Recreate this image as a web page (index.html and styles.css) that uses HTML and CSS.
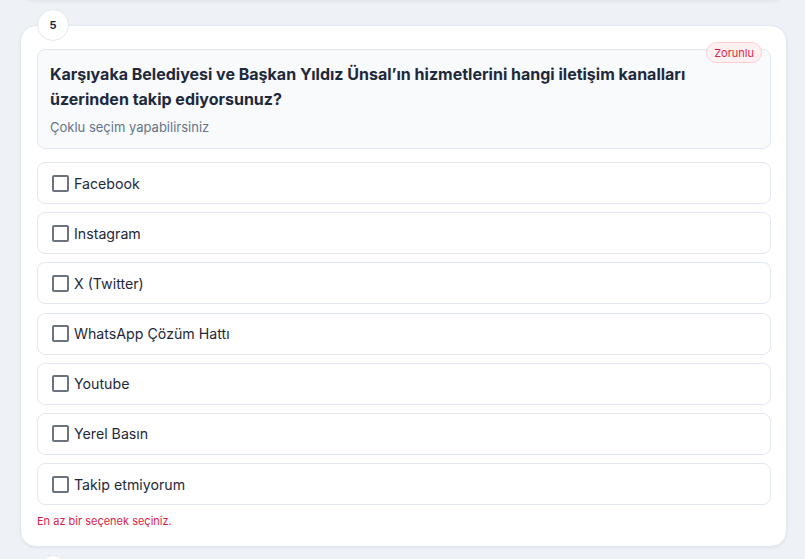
FILE: index.html
```html
<!DOCTYPE html>
<html lang="tr">
<head>
<meta charset="utf-8">
<link rel="stylesheet" href="styles.css">
</head>
<body>
<div class="list">
  <div class="card card-prev"></div>
  <section class="card">
    <div class="num">5</div>
    <div class="question">
      <span class="required">Zorunlu</span>
      <h2 class="q-title">Karşıyaka Belediyesi ve Başkan Yıldız Ünsal’ın hizmetlerini hangi iletişim kanalları üzerinden takip ediyorsunuz?</h2>
      <p class="q-sub">Çoklu seçim yapabilirsiniz</p>
    </div>
    <div class="options">
      <label class="option"><span class="box"></span><span class="label">Facebook</span></label>
      <label class="option"><span class="box"></span><span class="label">Instagram</span></label>
      <label class="option"><span class="box"></span><span class="label">X (Twitter)</span></label>
      <label class="option"><span class="box"></span><span class="label">WhatsApp Çözüm Hattı</span></label>
      <label class="option"><span class="box"></span><span class="label">Youtube</span></label>
      <label class="option"><span class="box"></span><span class="label">Yerel Basın</span></label>
      <label class="option"><span class="box"></span><span class="label">Takip etmiyorum</span></label>
    </div>
    <p class="error">En az bir seçenek seçiniz.</p>
  </section>
  <section class="card card-next">
    <div class="num"></div>
  </section>
</div>
</body>
</html>
```
FILE: styles.css
```css
* { box-sizing: border-box; }
html, body { margin: 0; padding: 0; }
body {
  background: #eef1f6;
  font-family: Inter, "Noto Sans", sans-serif;
  color: #1e293b;
  width: 805px;
  height: 559px;
  overflow: hidden;
}
.list {
  display: flex;
  flex-direction: column;
  gap: 24px;
  padding: 0 18px 0 20px;
}
.card {
  position: relative;
  background: #fff;
  border: 1px solid #e2e8f0;
  border-radius: 16px;
  box-shadow: 0 1px 3px rgba(15, 23, 42, 0.06);
  padding: 23px 15px 17px 16px;
}
.card-prev {
  height: 60px;
  margin-top: -59px;
}
.card-next { height: 80px; }
.num {
  position: absolute;
  top: -17px;
  left: 16px;
  width: 32px;
  height: 32px;
  border-radius: 50%;
  background: #fff;
  border: 1px solid #e2e8f0;
  display: flex;
  align-items: center;
  justify-content: center;
  font-size: 11px;
  font-weight: 700;
  color: #1e293b;
}
.question {
  position: relative;
  background: #f8fafc;
  border: 1px solid #e2e8f0;
  border-radius: 8px;
  padding: 12px 12px 11px;
}
.required {
  position: absolute;
  top: -8px;
  right: 8px;
  height: 21px;
  padding: 0 7px;
  display: flex;
  align-items: center;
  background: #fff1f2;
  border: 1px solid #fecdd3;
  border-radius: 11px;
  font-size: 11px;
  color: #e11d48;
}
.q-title {
  margin: 0;
  font-size: 16px;
  line-height: 25px;
  font-weight: 700;
  color: #1e293b;
}
.q-sub {
  margin: 5px 0 0;
  font-size: 13px;
  line-height: 20px;
  color: #64748b;
}
.options {
  display: flex;
  flex-direction: column;
  gap: 8.2px;
  margin-top: 13px;
}
.option {
  display: flex;
  align-items: center;
  gap: 5px;
  height: 42px;
  padding: 0 14px;
  border: 1px solid #e2e8f0;
  border-radius: 8px;
  background: #fff;
}
.box {
  width: 17px;
  height: 17px;
  border: 2px solid #6b7280;
  border-radius: 2px;
  flex: none;
}
.label {
  font-size: 14.2px;
  color: #1e293b;
}
.error {
  margin: 8px 0 0;
  font-size: 11px;
  line-height: 16px;
  color: #e11d48;
}
```
